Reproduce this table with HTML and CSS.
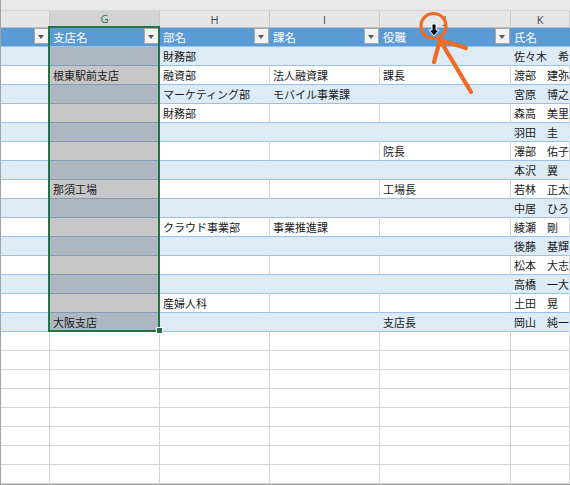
FILE: index.html
```html
<!DOCTYPE html>
<html lang="ja">
<head>
<meta charset="utf-8">
<title>Sheet</title>
<link rel="stylesheet" href="styles.css">
</head>
<body>
<div class="sheet">
  <div class="topbar"></div>
  <div class="row colhead">
    <div class="ch"></div>
    <div class="ch sel">G</div>
    <div class="ch">H</div>
    <div class="ch">I</div>
    <div class="ch">J</div>
    <div class="ch">K</div>
  </div>
  <div class="row thead">
    <div class="th"><span class="dd"></span></div>
    <div class="th"><span class="tx">支店名</span><span class="dd"></span></div>
    <div class="th"><span class="tx">部名</span><span class="dd"></span></div>
    <div class="th"><span class="tx">課名</span><span class="dd"></span></div>
    <div class="th"><span class="tx">役職</span><span class="dd"></span></div>
    <div class="th"><span class="tx">氏名</span></div>
  </div>

  <div class="row band"><div class="c"></div><div class="c g"></div><div class="c">財務部</div><div class="c"></div><div class="c"></div><div class="c">佐々木　希</div></div>
  <div class="row plain"><div class="c"></div><div class="c g">根東駅前支店</div><div class="c">融資部</div><div class="c">法人融資課</div><div class="c">課長</div><div class="c">渡部　建弥</div></div>
  <div class="row band"><div class="c"></div><div class="c g"></div><div class="c">マーケティング部</div><div class="c">モバイル事業課</div><div class="c"></div><div class="c">宮原　博之</div></div>
  <div class="row plain"><div class="c"></div><div class="c g"></div><div class="c">財務部</div><div class="c"></div><div class="c"></div><div class="c">森高　美里</div></div>
  <div class="row band"><div class="c"></div><div class="c g"></div><div class="c"></div><div class="c"></div><div class="c"></div><div class="c">羽田　圭</div></div>
  <div class="row plain"><div class="c"></div><div class="c g"></div><div class="c"></div><div class="c"></div><div class="c">院長</div><div class="c">澤部　佑子</div></div>
  <div class="row band"><div class="c"></div><div class="c g"></div><div class="c"></div><div class="c"></div><div class="c"></div><div class="c">本沢　翼</div></div>
  <div class="row plain"><div class="c"></div><div class="c g">那須工場</div><div class="c"></div><div class="c"></div><div class="c">工場長</div><div class="c">若林　正太</div></div>
  <div class="row band"><div class="c"></div><div class="c g"></div><div class="c"></div><div class="c"></div><div class="c"></div><div class="c">中居　ひろみ</div></div>
  <div class="row plain"><div class="c"></div><div class="c g"></div><div class="c">クラウド事業部</div><div class="c">事業推進課</div><div class="c"></div><div class="c">綾瀬　剛</div></div>
  <div class="row band"><div class="c"></div><div class="c g"></div><div class="c"></div><div class="c"></div><div class="c"></div><div class="c">後藤　基輝</div></div>
  <div class="row plain"><div class="c"></div><div class="c g"></div><div class="c"></div><div class="c"></div><div class="c"></div><div class="c">松本　大志</div></div>
  <div class="row band"><div class="c"></div><div class="c g"></div><div class="c"></div><div class="c"></div><div class="c"></div><div class="c">高橋　一大</div></div>
  <div class="row plain"><div class="c"></div><div class="c g"></div><div class="c">産婦人科</div><div class="c"></div><div class="c"></div><div class="c">土田　晃</div></div>
  <div class="row band"><div class="c"></div><div class="c g">大阪支店</div><div class="c"></div><div class="c"></div><div class="c">支店長</div><div class="c">岡山　純一</div></div>

  <div class="row empty"><div class="c"></div><div class="c"></div><div class="c"></div><div class="c"></div><div class="c"></div><div class="c"></div></div>
  <div class="row empty"><div class="c"></div><div class="c"></div><div class="c"></div><div class="c"></div><div class="c"></div><div class="c"></div></div>
  <div class="row empty"><div class="c"></div><div class="c"></div><div class="c"></div><div class="c"></div><div class="c"></div><div class="c"></div></div>
  <div class="row empty"><div class="c"></div><div class="c"></div><div class="c"></div><div class="c"></div><div class="c"></div><div class="c"></div></div>
  <div class="row empty"><div class="c"></div><div class="c"></div><div class="c"></div><div class="c"></div><div class="c"></div><div class="c"></div></div>
  <div class="row empty"><div class="c"></div><div class="c"></div><div class="c"></div><div class="c"></div><div class="c"></div><div class="c"></div></div>
  <div class="row empty"><div class="c"></div><div class="c"></div><div class="c"></div><div class="c"></div><div class="c"></div><div class="c"></div></div>
  <div class="row empty"><div class="c"></div><div class="c"></div><div class="c"></div><div class="c"></div><div class="c"></div><div class="c"></div></div>

  <div class="selbox"></div>
  <div class="handle"></div>

  <svg class="annot" width="570" height="485" viewBox="0 0 570 485">
    <circle cx="433.5" cy="26" r="12.5" fill="none" stroke="#f26a22" stroke-width="3.2"/>
    <g stroke="#f26a22" stroke-width="4.2" stroke-linecap="round" fill="none">
      <line x1="471" y1="92" x2="440" y2="40"/>
      <line x1="440" y1="40" x2="434" y2="62"/>
      <line x1="440" y1="40" x2="466" y2="48"/>
    </g>
    <polygon points="432,24 436,24 436,30 439,30 434,36 429,30 432,30" fill="#000" stroke="#fff" stroke-width="1"/>
  </svg>
</div>
</body>
</html>
```

FILE: styles.css
```css
html, body {
  margin: 0;
  padding: 0;
  background: #ffffff;
}

.sheet {
  position: relative;
  width: 570px;
  height: 485px;
  box-sizing: border-box;
  border-left: 1px solid #a3a3a3;
  background: #a3a3a3;
  overflow: hidden;
  font-family: "Noto Sans CJK JP", "Noto Sans", sans-serif;
  font-size: 11px;
  color: #1a1a1a;
}

.topbar {
  height: 11px;
  box-sizing: border-box;
  background: #e8e8e8;
  border-bottom: 1px solid #d6d6d6;
}

.row {
  display: grid;
  grid-template-columns: 49px 110px 110px 110px 131px 59px;
  background: #fff;
}

/* column letters */
.colhead {
  height: 17px;
  background: #e6e6e6;
}
.ch {
  box-sizing: border-box;
  border-right: 1px solid #c9c9c9;
  border-bottom: 1px solid #bdbdbd;
  display: flex;
  align-items: center;
  justify-content: center;
  font-family: "Open Sans", "Noto Sans", sans-serif;
  font-size: 11px;
  color: #444;
}
.ch.sel {
  background: #d3d3d3;
  color: #217346;
  border-bottom: 2px solid #217346;
}

/* table header */
.thead {
  height: 19px;
  background: #5b9bd5;
}
.th {
  box-sizing: border-box;
  border-bottom: 1px solid #9bc2e6;
  display: flex;
  align-items: center;
  padding: 0 1px 0 3px;
  color: #fff;
  font-size: 11.5px;
  white-space: nowrap;
}
.tx {
  flex: 1;
}
.dd {
  margin-left: auto;
  align-self: flex-start;
  width: 15px;
  height: 16px;
  box-sizing: border-box;
  background: #f3f3f3;
  border: 1px solid #a9a9a9;
  position: relative;
}
.dd::after {
  content: "";
  position: absolute;
  left: 3px;
  top: 6px;
  border-left: 3.5px solid transparent;
  border-right: 3.5px solid transparent;
  border-top: 4px solid #595959;
}

/* data cells */
.c {
  box-sizing: border-box;
  height: 19px;
  padding: 0 0 0 3px;
  line-height: 18px;
  white-space: nowrap;
  overflow: hidden;
  border-bottom: 1px solid #9bc2e6;
  border-right: 1px solid #d4d4d4;
}
.band .c {
  background: #ddebf7;
  border-right-color: #ddebf7;
}
.plain .c {
  background: #fff;
}
.band .c.g {
  background: #acb7c1;
  border-right-color: #acb7c1;
  border-bottom-color: #7f9bb5;
}
.plain .c.g {
  background: #c7c7c7;
  border-right-color: #c7c7c7;
  border-bottom-color: #7f9bb5;
}
.empty .c {
  background: #fff;
  border-bottom: 1px solid #d4d4d4;
  border-right: 1px solid #d4d4d4;
}

/* selection overlay */
.selbox {
  position: absolute;
  left: 47px;
  top: 26px;
  width: 112px;
  height: 306px;
  box-sizing: border-box;
  border: 2px solid #217346;
}
.handle {
  position: absolute;
  left: 155px;
  top: 327px;
  width: 7px;
  height: 7px;
  box-sizing: border-box;
  background: #217346;
  border: 1px solid #fff;
}

.annot {
  position: absolute;
  left: -1px;
  top: 0;
  pointer-events: none;
}
```
